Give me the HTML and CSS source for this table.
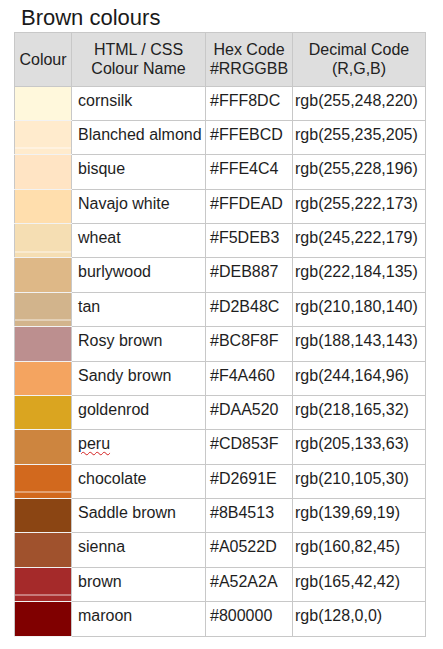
FILE: index.html
```html
<!DOCTYPE html>
<html>
<head>
<meta charset="utf-8">
<link rel="stylesheet" href="styles.css">
</head>
<body>
<h1 class="title">Brown colours</h1>
<table class="colours">
  <thead>
    <tr class="head">
      <th class="c1">Colour</th>
      <th class="c2">HTML / CSS<br>Colour Name</th>
      <th class="c3">Hex Code<br>#RRGGBB</th>
      <th class="c4">Decimal Code<br>(R,G,B)</th>
    </tr>
  </thead>
  <tbody>
    <tr><td class="sw" style="--c:#FFF8DC"></td><td class="name">cornsilk</td><td class="hex">#FFF8DC</td><td class="dec">rgb(255,248,220)</td></tr>
    <tr><td class="sw line" style="--c:#FFEBCD"></td><td class="name">Blanched almond</td><td class="hex">#FFEBCD</td><td class="dec">rgb(255,235,205)</td></tr>
    <tr><td class="sw" style="--c:#FFE4C4"></td><td class="name">bisque</td><td class="hex">#FFE4C4</td><td class="dec">rgb(255,228,196)</td></tr>
    <tr><td class="sw" style="--c:#FFDEAD"></td><td class="name">Navajo white</td><td class="hex">#FFDEAD</td><td class="dec">rgb(255,222,173)</td></tr>
    <tr><td class="sw line" style="--c:#F5DEB3"></td><td class="name">wheat</td><td class="hex">#F5DEB3</td><td class="dec">rgb(245,222,179)</td></tr>
    <tr><td class="sw" style="--c:#DEB887"></td><td class="name">burlywood</td><td class="hex">#DEB887</td><td class="dec">rgb(222,184,135)</td></tr>
    <tr><td class="sw line" style="--c:#D2B48C"></td><td class="name">tan</td><td class="hex">#D2B48C</td><td class="dec">rgb(210,180,140)</td></tr>
    <tr><td class="sw" style="--c:#BC8F8F"></td><td class="name">Rosy brown</td><td class="hex">#BC8F8F</td><td class="dec">rgb(188,143,143)</td></tr>
    <tr><td class="sw" style="--c:#F4A460"></td><td class="name">Sandy brown</td><td class="hex">#F4A460</td><td class="dec">rgb(244,164,96)</td></tr>
    <tr><td class="sw" style="--c:#DAA520"></td><td class="name">goldenrod</td><td class="hex">#DAA520</td><td class="dec">rgb(218,165,32)</td></tr>
    <tr><td class="sw" style="--c:#CD853F"></td><td class="name"><span class="spell">peru</span></td><td class="hex">#CD853F</td><td class="dec">rgb(205,133,63)</td></tr>
    <tr><td class="sw line" style="--c:#D2691E"></td><td class="name">chocolate</td><td class="hex">#D2691E</td><td class="dec">rgb(210,105,30)</td></tr>
    <tr><td class="sw" style="--c:#8B4513"></td><td class="name">Saddle brown</td><td class="hex">#8B4513</td><td class="dec">rgb(139,69,19)</td></tr>
    <tr><td class="sw" style="--c:#A0522D"></td><td class="name">sienna</td><td class="hex">#A0522D</td><td class="dec">rgb(160,82,45)</td></tr>
    <tr><td class="sw line" style="--c:#A52A2A"></td><td class="name">brown</td><td class="hex">#A52A2A</td><td class="dec">rgb(165,42,42)</td></tr>
    <tr><td class="sw" style="--c:#800000"></td><td class="name">maroon</td><td class="hex">#800000</td><td class="dec">rgb(128,0,0)</td></tr>
  </tbody>
</table>
</body>
</html>
```

FILE: styles.css
```css
html, body {
  margin: 0;
  padding: 0;
  background: #ffffff;
}
body {
  font-family: Arial, "Liberation Sans", sans-serif;
  color: #1e1e1e;
  padding: 0 0 0 14px;
}
.title {
  margin: 0 0 2px 0;
  padding: 5px 0 0 7px;
  font-size: 22px;
  line-height: 25px;
  font-weight: normal;
  color: #1a1a1a;
}
.colours {
  border-collapse: collapse;
  table-layout: fixed;
  width: 412px;
  font-size: 16px;
}
.colours tr {
  height: 34.375px;
}
.colours tr.head {
  height: 53.5px;
}
.colours th,
.colours td {
  border: 1px solid #c8c8c8;
  padding: 0;
}
.colours th {
  background: #dedede;
  font-weight: normal;
  text-align: center;
  vertical-align: middle;
  line-height: 19px;
  color: #222;
}
.colours th.c1 { width: 56px; }
.colours th.c2 { width: 133px; }
.colours th.c3 { width: 86px; }
.colours th.c4 { width: 132px; }
.colours td {
  line-height: 18px;
  vertical-align: top;
  padding-top: 5px;
  white-space: nowrap;
}
.colours td.sw {
  background-color: var(--c);
  border-top-color: #f2f2f2;
  border-bottom-color: #f2f2f2;
  padding: 0;
}
.colours td.sw.line {
  background-image: linear-gradient(to bottom, transparent 0, transparent calc(100% - 6px), rgba(255,255,255,0.75) calc(100% - 6px), rgba(255,255,255,0.75) calc(100% - 5px), transparent calc(100% - 5px));
}
.colours td.name { padding-left: 6px; }
.colours td.hex { padding-left: 4px; }
.colours td.dec { padding-left: 2px; }
.spell {
  text-decoration: underline wavy #d42020;
  text-decoration-thickness: 1px;
  text-underline-offset: 2px;
}
```
